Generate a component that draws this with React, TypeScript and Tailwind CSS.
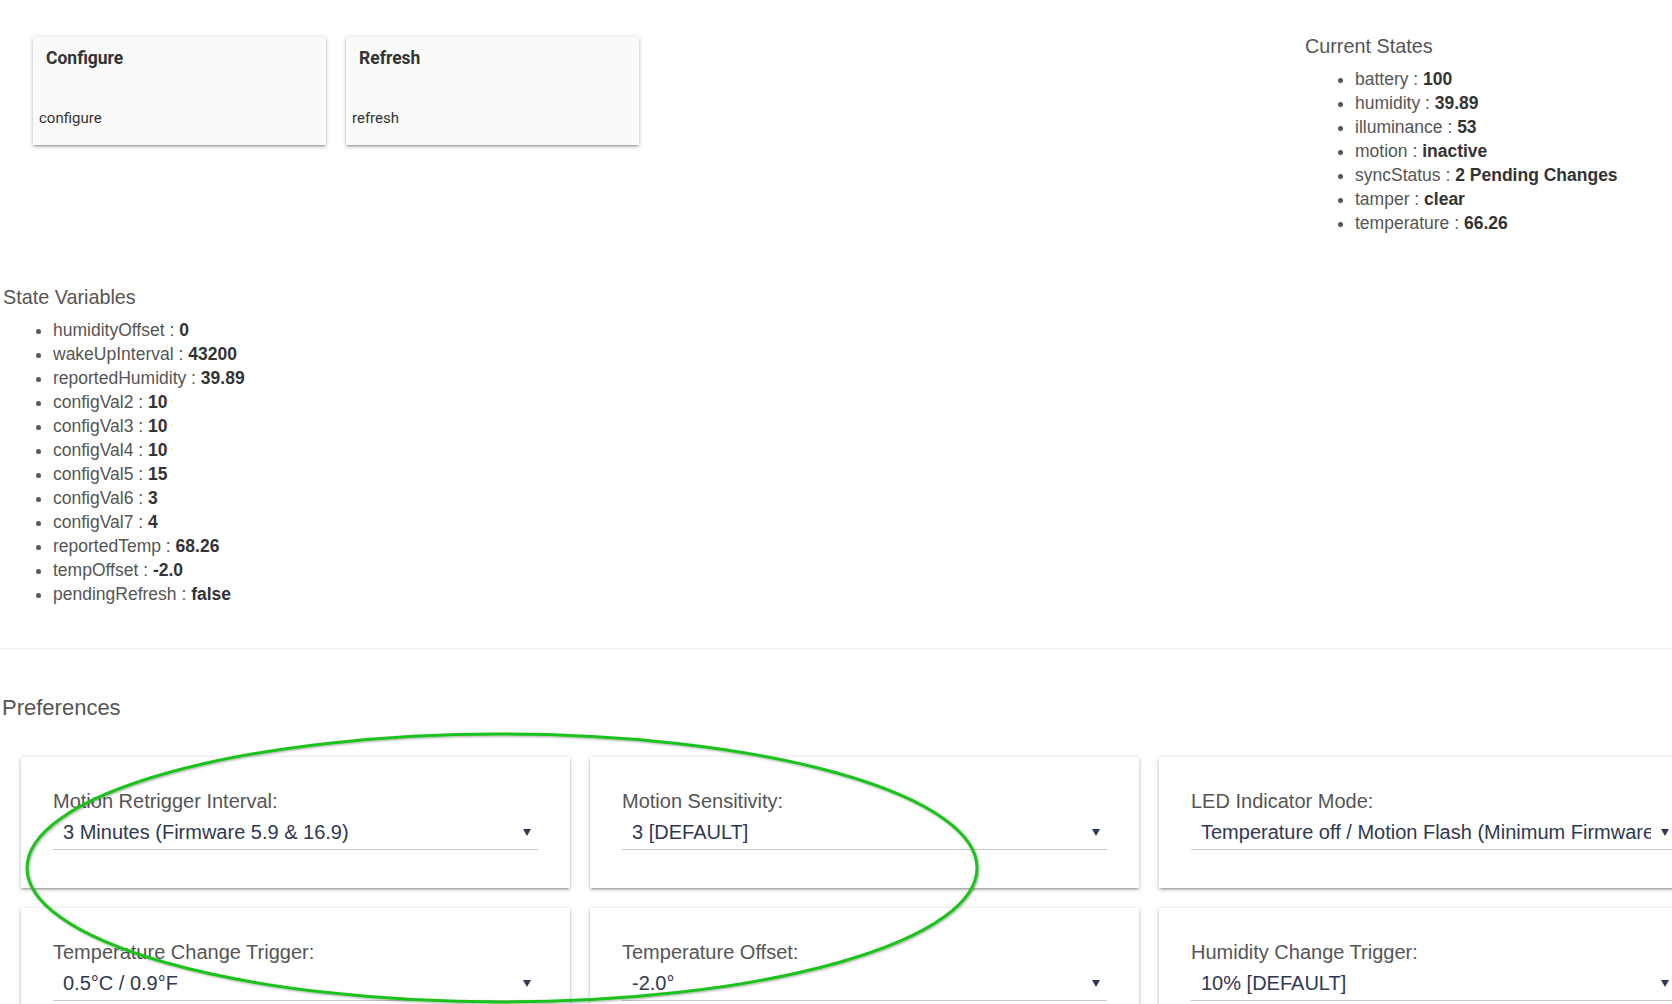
import React from 'react';

// Device detail page: commands, current states, state variables and preferences

const currentStates: [string, string][] = [
  ['battery', '100'],
  ['humidity', '39.89'],
  ['illuminance', '53'],
  ['motion', 'inactive'],
  ['syncStatus', '2 Pending Changes'],
  ['tamper', 'clear'],
  ['temperature', '66.26'],
];

const stateVariables: [string, string][] = [
  ['humidityOffset', '0'],
  ['wakeUpInterval', '43200'],
  ['reportedHumidity', '39.89'],
  ['configVal2', '10'],
  ['configVal3', '10'],
  ['configVal4', '10'],
  ['configVal5', '15'],
  ['configVal6', '3'],
  ['configVal7', '4'],
  ['reportedTemp', '68.26'],
  ['tempOffset', '-2.0'],
  ['pendingRefresh', 'false'],
];

const preferences = [
  { label: 'Motion Retrigger Interval:', value: '3 Minutes (Firmware 5.9 & 16.9)' },
  { label: 'Motion Sensitivity:', value: '3 [DEFAULT]' },
  { label: 'LED Indicator Mode:', value: 'Temperature off / Motion Flash (Minimum Firmware 5.9 & 16.9)' },
  { label: 'Temperature Change Trigger:', value: '0.5°C / 0.9°F' },
  { label: 'Temperature Offset:', value: '-2.0°' },
  { label: 'Humidity Change Trigger:', value: '10% [DEFAULT]' },
];

function CommandCard({ title, name }: { title: string; name: string }) {
  return (
    <div className="w-[293px] h-[108px] bg-[#fafafa] shadow-[0_2px_2px_0_rgba(0,0,0,0.14),0_3px_1px_-2px_rgba(0,0,0,0.12),0_1px_5px_0_rgba(0,0,0,0.2)] font-['Roboto',sans-serif] text-[#333]">
      <div className="pl-[13px] pt-[10px] text-[17.5px] leading-[22px] font-bold">{title}</div>
      <div className="pl-[6px] pt-[40px] text-[15px] leading-[18px]">{name}</div>
    </div>
  );
}

function AttrList({ items }: { items: [string, string][] }) {
  return (
    <ul className="list-disc pl-[50px] text-[17.5px] leading-[24px] text-[#555] marker:text-[#555]">
      {items.map(([k, v]) => (
        <li key={k}>
          {k} : <b className="font-bold text-[#333]">{v}</b>
        </li>
      ))}
    </ul>
  );
}

function PrefCard({ label, value }: { label: string; value: string }) {
  return (
    <div className="w-[549px] shrink-0 bg-white px-[32px] pt-[32px] pb-[38px] shadow-[0_2px_2px_0_rgba(0,0,0,0.14),0_3px_1px_-2px_rgba(0,0,0,0.12),0_1px_5px_0_rgba(0,0,0,0.2)]">
      <div className="text-[20px] leading-[24px] text-[#555]">{label}</div>
      <div className="mt-[2px] relative h-[35px] border-b border-[#c8c8c8] flex items-center pl-[10px] pr-[25px]">
        <div className="text-[20px] leading-[24px] text-[#2f3850] whitespace-nowrap overflow-hidden">{value}</div>
        <svg className="absolute right-[7px] top-[14px]" width="8" height="7" viewBox="0 0 8 7">
          <path d="M0 0 H8 L4 7 Z" fill="#2f3a55" />
        </svg>
      </div>
    </div>
  );
}

export default function App() {
  return (
    <div className="relative w-[1672px] h-[1004px] overflow-hidden bg-white font-['Liberation_Sans',Arial,sans-serif]">
      {/* Top: commands + current states */}
      <div className="flex">
        <div className="w-[1305px] shrink-0 pt-[37px] pl-[33px] flex gap-[20px] items-start">
          <CommandCard title="Configure" name="configure" />
          <CommandCard title="Refresh" name="refresh" />
        </div>
        <div className="pt-[34px]">
          <div className="text-[19.8px] leading-[24px] text-[#555]">Current States</div>
          <div className="mt-[9px]">
            <AttrList items={currentStates} />
          </div>
        </div>
      </div>

      {/* State variables */}
      <div className="mt-[50px] pl-[3px]">
        <div className="text-[19.8px] leading-[24px] text-[#555]">State Variables</div>
        <div className="mt-[9px]">
          <AttrList items={stateVariables} />
        </div>
      </div>

      <div className="mt-[42px] h-px bg-[#eeeeee] shadow-[0_1px_2px_rgba(0,0,0,0.03)]" />

      {/* Preferences */}
      <div className="mt-[46px] pl-[2px] text-[22px] leading-[26px] text-[#555]">Preferences</div>
      <div className="mt-[36px] pl-[21px] grid grid-cols-[549px_549px_549px] gap-[20px]">
        {preferences.map((p) => (
          <PrefCard key={p.label} label={p.label} value={p.value} />
        ))}
      </div>

      {/* Hand-drawn annotation */}
      <svg className="absolute left-0 top-0 pointer-events-none" width="1672" height="1004" viewBox="0 0 1672 1004">
        <defs>
          <filter id="sh" x="-10%" y="-10%" width="120%" height="120%">
            <feDropShadow dx="1" dy="1" stdDeviation="1" floodColor="#000" floodOpacity="0.35" />
          </filter>
        </defs>
        <ellipse cx="502" cy="868" rx="475" ry="134" fill="none" stroke="#1ec21e" strokeWidth="3" filter="url(#sh)" />
      </svg>
    </div>
  );
}
